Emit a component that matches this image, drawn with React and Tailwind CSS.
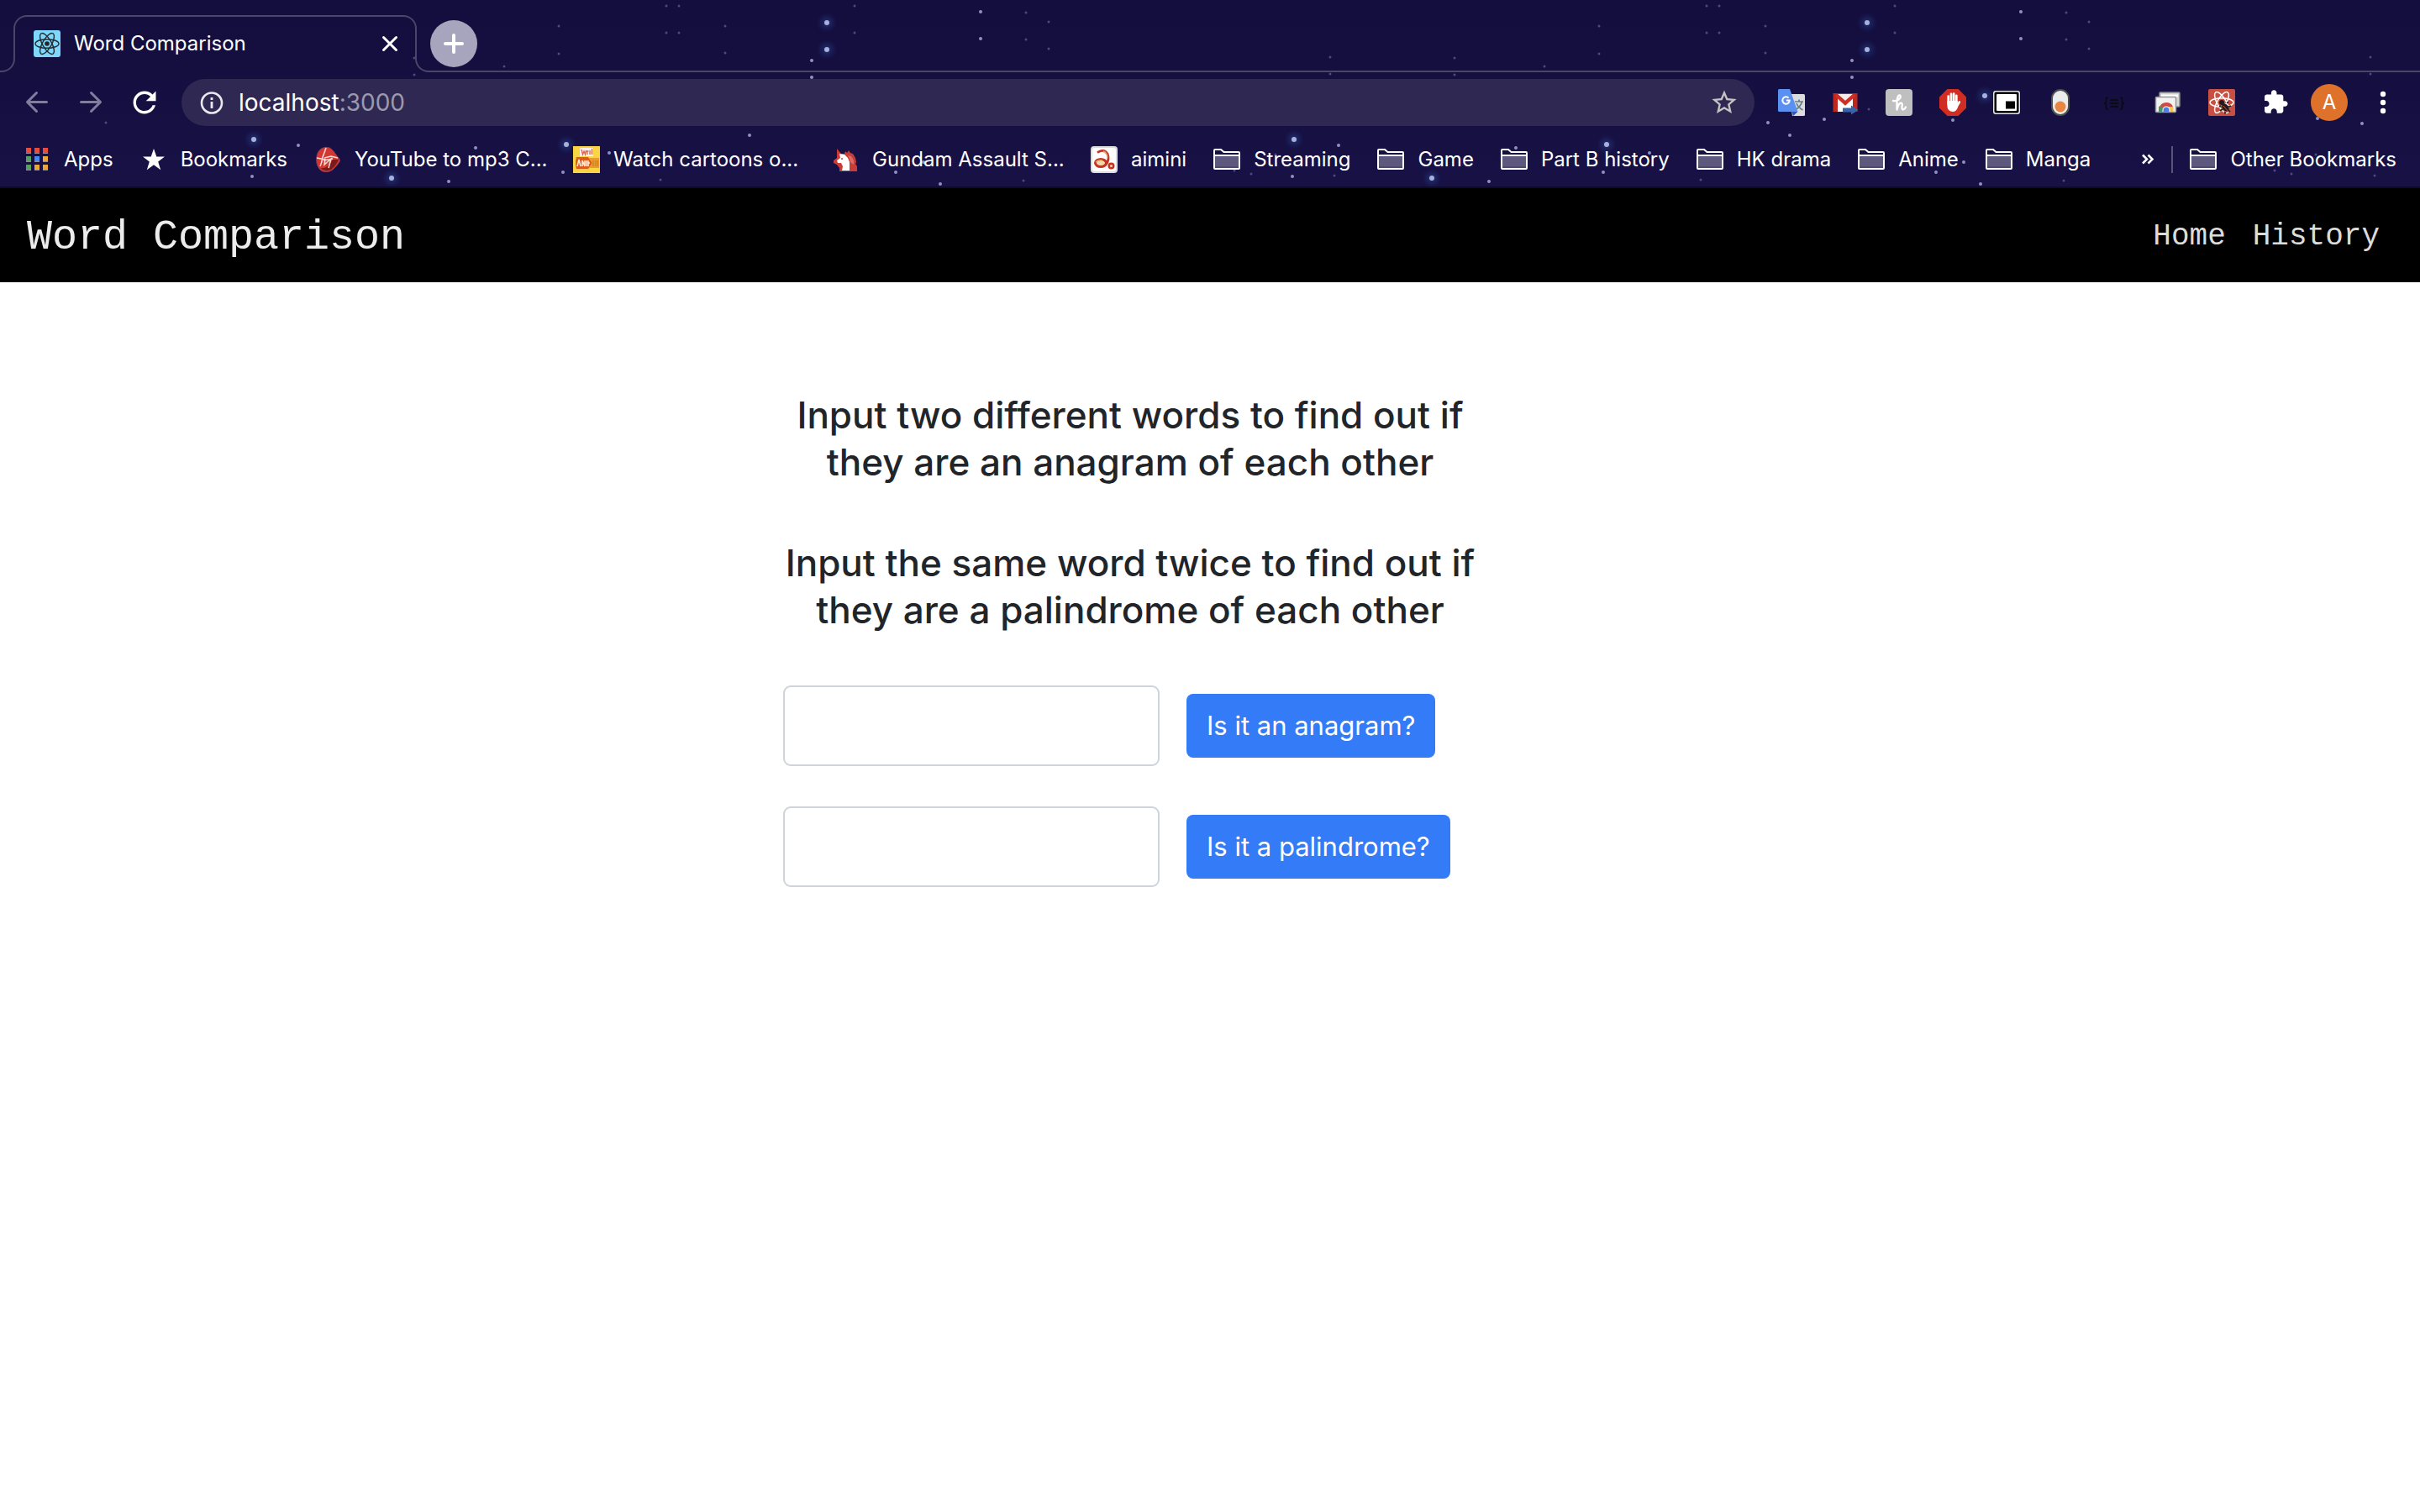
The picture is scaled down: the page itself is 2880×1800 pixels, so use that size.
import React from "react";

const icon = "block size-8 shrink-0";

/* ---------- Theme backdrop ---------- */

const brightStars = [[984, 27], [984, 59], [302, 166], [466, 212], [674, 172], [1124, 114]];
const softStars = [
  [966, 72], [966, 92], [1167, 14], [1167, 46], [355, 173], [566, 176], [1066, 205], [1119, 219],
  [866, 146], [933, 142], [1099, 193], [1520, 141], [1573, 147], [725, 182],
  [892, 161], [670, 205], [300, 210], [534, 216], [1086, 143],
];
const dimStars = [
  [793, 7], [808, 7], [793, 39], [808, 39], [665, 31], [665, 64], [863, 31], [863, 63],
  [1017, 7], [1017, 39], [1221, 15], [1221, 47], [1248, 26], [1248, 58], [493, 69], [493, 89],
  [126, 146], [600, 79], [599, 180], [786, 214], [986, 130], [1218, 215], [1469, 203],
  [1489, 207], [1588, 209], [1583, 68], [1583, 88], [1518, 184],
];

function Starfield() {
  return (
    <svg className="pointer-events-none absolute inset-0 h-full w-full" aria-hidden="true">
      <defs>
        <radialGradient id="halo">
          <stop offset="0" stopColor="#2f4f9a" stopOpacity="0.6" />
          <stop offset="1" stopColor="#1b2f74" stopOpacity="0" />
        </radialGradient>
      </defs>
      {[0, 1238].map((dx) => (
        <g key={dx}>
          {brightStars.map(([x, y]) => (
            <g key={x + "-" + y}>
              <circle cx={x + dx} cy={y} r="12" fill="url(#halo)" />
              <circle cx={x + dx} cy={y} r="3" fill="#a9b0dc" />
            </g>
          ))}
          {softStars.map(([x, y]) => (
            <circle key={x + "-" + y} cx={x + dx} cy={y} r="2" fill="#8f92c6" />
          ))}
          {dimStars.map(([x, y]) => (
            <circle key={x + "-" + y} cx={x + dx} cy={y} r="1.5" fill="#4d4a80" />
          ))}
        </g>
      ))}
    </svg>
  );
}

/* ---------- Icons ---------- */

function Orbits({ color, width, r = 13 }) {
  return (
    <g fill="none" stroke={color} strokeWidth={width}>
      {[0, 60, 120].map((a) => (
        <ellipse key={a} cx="16" cy="16" rx={r} ry={r * 0.38} transform={`rotate(${a} 16 16)`} />
      ))}
    </g>
  );
}

const ReactFavicon = () => (
  <svg viewBox="0 0 32 32" className={icon}>
    <rect width="32" height="32" rx="3" fill="#7fd8fb" />
    <Orbits color="#222b30" width="1.4" r={14} />
    <circle cx="16" cy="16" r="2.8" fill="#20262b" />
  </svg>
);

const BackIcon = () => (
  <svg viewBox="0 0 32 32" className={icon} fill="none" stroke="#827c9e" strokeWidth="3" strokeLinecap="round" strokeLinejoin="round">
    <path d="M27.500 15.500H5M15.500 4.500L4.500 15.500L15.500 26.500" />
  </svg>
);
const ForwardIcon = () => (
  <svg viewBox="0 0 32 32" className={icon} fill="none" stroke="#827c9e" strokeWidth="3" strokeLinecap="round" strokeLinejoin="round">
    <path d="M4.500 15.500H27M16.500 4.500L27.500 15.500L16.500 26.500" />
  </svg>
);
const ReloadIcon = () => (
  <svg viewBox="2.5 2.5 19 19" className={icon} fill="#fff">
    <path d="M17.650 6.350C16.200 4.900 14.210 4 12 4c-4.420 0-7.990 3.580-7.990 8s3.570 8 7.990 8c3.730 0 6.840-2.550 7.730-6h-2.080c-.82 2.330-3.040 4-5.650 4-3.310 0-6-2.690-6-6s2.690-6 6-6c1.660 0 3.140.69 4.220 1.780L13 11h7V4l-2.350 2.350z" />
  </svg>
);
const InfoIcon = () => (
  <svg viewBox="0 0 32 32" className={icon}>
    <circle cx="16" cy="16.500" r="12" fill="none" stroke="#eae8ee" strokeWidth="2.600" />
    <rect x="14.600" y="15" width="2.800" height="8" fill="#eae8ee" />
    <rect x="14.600" y="10" width="2.800" height="3" fill="#eae8ee" />
  </svg>
);
const StarOutline = () => (
  <svg viewBox="1 1 22 22" className={icon} fill="#c6c3c2">
    <path d="M22 9.240l-7.190-.62L12 2 9.190 8.630 2 9.240l5.460 4.730L5.820 21 12 17.270 18.180 21l-1.630-7.030L22 9.240zM12 15.400l-3.760 2.270 1-4.280-3.320-2.880 4.380-.38L12 6.100l1.710 4.040 4.380.38-3.320 2.880 1 4.280L12 15.400z" />
  </svg>
);
const StarFilled = () => (
  <svg viewBox="0 0 32 32" className={icon} fill="#fff">
    <path d="M16 3l3.300 9.600h9.700l-7.800 5.900 3 9.700L16 22.300l-8.200 5.900 3-9.700L3 12.600h9.700z" />
  </svg>
);
const AppsIcon = () => {
  const colors = ["#ea4b3d", "#ea4b3d", "#ea4b3d", "#55a05f", "#4587f4", "#eba734", "#55a05f", "#eba734", "#eba734"];
  return (
    <svg viewBox="0 0 32 32" className={icon}>
      {colors.map((c, i) => (
        <g key={i}>
          <rect x={3 + (i % 3) * 10} y={2 + Math.floor(i / 3) * 10} width="6" height="7" fill="#8d8799" />
          <rect x={3 + (i % 3) * 10} y={2 + Math.floor(i / 3) * 10} width="6" height="6" fill={c} />
        </g>
      ))}
    </svg>
  );
};
const FolderIcon = () => (
  <svg viewBox="0 0 32 32" className={icon}>
    <rect x="1" y="11" width="30" height="16" fill="#5f587e" />
    <rect x="2" y="24" width="28" height="2" fill="#4e486d" />
    <path d="M1 26V5Q1 4 2 4H9L12.500 7H30Q31 7 31 8V26Q31 27 30 27H2Q1 27 1 26ZM1 11H31" fill="none" stroke="#fff" strokeWidth="2" />
  </svg>
);

const VirginIcon = () => (
  <svg viewBox="0 0 32 32" className={icon}>
    <path d="M13 1.500C18 .5 22 4 25 9C28 13 30.500 15 30.500 17.500C29 21 25 25 22 28C18 31 11 32 7 28C3 24 2 18 3 12C4 6 8 2 13 1.500Z" fill="#d3372f" stroke="#8a3a5c" strokeWidth="1" />
    <path d="M22 16L29 16Q26 23 20 28Q12 31 7 26Q15 28 22 16Z" fill="#7d1a1a" />
    <path d="M3 14L13 16L12 22L20 15L17 26M14 2Q12 8 10 13Q9 20 7 24M12 14L20 12L28 14M11 17L22 15" fill="none" stroke="#f7d9d5" strokeWidth="1.600" />
  </svg>
);
const AnimeIcon = () => (
  <svg viewBox="0 0 32 32" className={icon}>
    <rect width="32" height="32" fill="#fbd443" />
    <rect x="8" y="2" width="16" height="10" rx="1" fill="#fdf0ee" />
    <path d="M10 4l1.500 6 1.500-4 1.500 4L15.500 5M17 10V6M20 5V10M22.500 3V10M15 6H18.500" stroke="#d8664a" strokeWidth="1.300" fill="none" />
    <path d="M4 13H18L23 20L18 27H4Q2 20 4 13Z" fill="#dd5a1d" />
    <path d="M19 14H31V26H19L22.500 20Z" fill="#eb9a2e" />
    <path d="M5 24L7 16L9 24M11 24V17L14 24V17M16 24V17M18 17V24M18 20H20" stroke="#fff0dc" strokeWidth="1.500" fill="none" />
    <path d="M24 17V24M27 17V24M29.500 17V24" stroke="#c98122" strokeWidth="1.200" />
  </svg>
);
const UnicornIcon = () => (
  <svg viewBox="0 0 32 32" className={icon}>
    <path d="M6 3L11 9H15L16 6L18 8L20 5L22 8L25 9L28 14L29 19L28 21L30 24V30H9V26L6 22L2 20V17L6 14V8Z" fill="#c93c37" />
    <path d="M9 9L15 10L19 14L21 19V29H12L13 24L11 20L7 20L6 17L10 14Z" fill="#fff" />
    <path d="M19 11L23 12L26 17V22L22 19L21 15Z" fill="#dd6a66" />
    <circle cx="12" cy="15" r="1" fill="#c93c37" />
  </svg>
);
const AiminiIcon = () => (
  <svg viewBox="0 0 32 32" className={icon}>
    <rect width="32" height="32" rx="4" fill="#dcdcde" />
    <rect x="2" y="2" width="28" height="28" rx="3" fill="#fff" />
    <path d="M9 7Q16 3 20 9Q23 16 18 22" fill="none" stroke="#c73222" strokeWidth="2.800" strokeLinecap="round" />
    <ellipse cx="12" cy="20" rx="6.500" ry="4.500" fill="#f3d9a8" stroke="#c73222" strokeWidth="3" />
    <circle cx="24.500" cy="23.500" r="2.800" fill="#f3d9a8" stroke="#c73222" strokeWidth="2.400" />
    <path d="M6 19Q9 16 14 17M15 6Q20 8 20 14" fill="none" stroke="#e0a86a" strokeWidth="1.400" />
  </svg>
);

const TranslateIcon = () => (
  <svg viewBox="0 0 32 32" className={icon}>
    <path d="M13 6H30.500Q32 6 32 7.500V30.500Q32 32 30.500 32H17Z" fill="#dcdcdc" />
    <path d="M20 15H30M25 12.500V15M28.500 15Q27 21 21 24.500M22 17Q24 22 29.500 25" fill="none" stroke="#64808c" strokeWidth="1.700" />
    <path d="M16.500 27H23.500L18 32Z" fill="#3455b4" />
    <path d="M1.500 0H14L23.500 27H1.500Q0 27 0 25.500V1.500Q0 0 1.500 0Z" fill="#5a90f0" />
    <path d="M12.600 10.600A4.200 4.200 0 1 0 13.700 13.600H9.800" fill="none" stroke="#fff" strokeWidth="2" />
  </svg>
);
const GmailForwardIcon = () => (
  <svg viewBox="0 0 32 32" className={icon}>
    <rect x="1.500" y="5" width="29" height="22" fill="#bf261d" />
    <path d="M7 27V10L16 18L25 10V27Z" fill="#fff" />
    <path d="M7 6H25L16 14Z" fill="#f6eceb" />
    <path d="M5 7L16 17L27 7" fill="none" stroke="#cf2f25" strokeWidth="4" />
    <path d="M13 22.500H23V19.500L31.500 25L23 30.500V27.500H13Z" fill="#3763ad" />
  </svg>
);
const HoneyIcon = () => (
  <svg viewBox="0 0 32 32" className={icon}>
    <rect width="32" height="32" rx="4" fill="#bfbfbf" />
    <path d="M9 14Q14 15 17.500 10.500Q18.500 7 16 7.500Q13.500 9 13.500 17V24.500Q15 17 18.500 16.500Q20.500 17 19.500 20.500Q19 24.500 21 24.500Q23 24 24 21.500" fill="none" stroke="#fff" strokeWidth="2.300" strokeLinecap="round" strokeLinejoin="round" />
  </svg>
);
const AdblockIcon = () => (
  <svg viewBox="0 0 32 32" className={icon}>
    <path d="M9.500 0H22.500L32 9.500V22.500L22.500 32H9.500L0 22.500V9.500Z" fill="#d22d22" />
    <g stroke="#fff" strokeWidth="2.700" strokeLinecap="round" fill="none">
      <path d="M10.700 18V8.500M14 16V5.800M17.200 16V5.500M20.300 17V7.800" />
      <path d="M21 20L23.800 15.500" />
    </g>
    <path d="M9.400 14H21.600V19.500L23 17Q22 26.500 16.500 27Q9.400 27 9.400 20Z" fill="#fff" />
  </svg>
);
const PipIcon = () => (
  <svg viewBox="0 0 32 32" className={icon}>
    <rect x="0" y="2" width="32" height="28" rx="3" fill="#e4e4e6" />
    <rect x="1.500" y="3.500" width="29" height="25" rx="2" fill="#000" />
    <rect x="4" y="6" width="24" height="20" rx="1" fill="#fff" />
    <rect x="15" y="14.500" width="11" height="9" fill="#000" />
  </svg>
);
const ToggleIcon = () => (
  <svg viewBox="0 0 32 32" className={icon}>
    <rect x="6" y="1" width="20" height="30" rx="10" fill="#ebecec" stroke="#4f4f50" strokeWidth="2" />
    <circle cx="16" cy="21" r="6.500" fill="#e98742" />
  </svg>
);
const BracesIcon = () => (
  <svg viewBox="0 0 32 32" className={icon} fill="none" stroke="#0c0a17" strokeWidth="2">
    <path d="M9 10Q6 10 6.500 13Q7 17 4 17Q7 17 6.500 21Q6 24 9 24M23 10Q26 10 25.500 13Q25 17 28 17Q25 17 25.500 21Q26 24 23 24M11 13H21M11 17H21M11 21H21M18 11.500V14.500M14 15.500V18.500M18 19.500V22.500" />
  </svg>
);
const ChromeWindowsIcon = () => (
  <svg viewBox="0 0 32 32" className={icon}>
    <rect x="6" y="4" width="24" height="17" rx="1" fill="#d5d5d5" stroke="#8a8a8a" strokeWidth="1.500" />
    <rect x="8" y="6.500" width="20" height="3" fill="#fff" />
    <rect x="1.500" y="9.500" width="24" height="18" rx="1" fill="#f2f2f2" stroke="#969696" strokeWidth="1.500" />
    <path d="M5.500 27V22Q8 16 14 16Q20 16 22 21H14Z" fill="#cf4b3f" />
    <path d="M5 27V21L8 20L11 27Z" fill="#45995c" />
    <path d="M16 21H22.500V27H15Z" fill="#f3c548" />
    <path d="M9.500 27V25A4.500 4.500 0 0 1 18.500 25V27Z" fill="#fff" />
    <path d="M10.500 27V25A3.500 3.500 0 0 1 17.500 25V27Z" fill="#4a7de6" />
  </svg>
);
const ReactDebugIcon = () => (
  <svg viewBox="0 0 32 32" className={icon}>
    <rect width="32" height="32" rx="2" fill="#c85042" />
    <Orbits color="#fff" width="1.500" r={14} />
    <path d="M14 14L24 21L26 27L20 28L13 20Z" fill="#c85042" />
    <circle cx="16" cy="16" r="3" fill="#1c1b1d" />
    <ellipse cx="20.500" cy="22" rx="3.600" ry="5" transform="rotate(-40 20.500 22)" fill="#1c1b1d" />
    <path d="M22 17L24 15M24 21L27 20M24 25L26 27M15 20L13 21M17 24L14 26M20 27V29.500" stroke="#1c1b1d" strokeWidth="1.600" />
    <path d="M18 20L23.500 26.500" stroke="#c85042" strokeWidth="1" />
  </svg>
);
const PuzzleIcon = () => (
  <svg viewBox="0 0 22 22" className={icon} fill="#fff">
    <path d="M19.500 10H18V6c0-1.100-.9-2-2-2h-4V2.500C12 1.120 10.880 0 9.500 0S7 1.120 7 2.500V4H3c-1.100 0-1.990.9-1.990 2v3.800H2.500c1.490 0 2.700 1.210 2.700 2.700s-1.210 2.700-2.700 2.700H1V19c0 1.100.9 2 2 2h3.800v-1.500c0-1.490 1.210-2.700 2.700-2.700 1.490 0 2.700 1.210 2.700 2.700V21H16c1.100 0 2-.9 2-2v-4h1.500c1.380 0 2.500-1.120 2.500-2.500S20.880 10 19.500 10z" transform="translate(1.200 .8) scale(.9)" />
  </svg>
);
const DotsIcon = () => (
  <svg viewBox="0 0 32 32" className={icon} fill="#fff">
    <circle cx="16" cy="6" r="3.200" />
    <circle cx="16" cy="16" r="3.200" />
    <circle cx="16" cy="26" r="3.200" />
  </svg>
);

/* ---------- Browser chrome ---------- */

const extensions = [
  ["Translate", TranslateIcon],
  ["Mail forward", GmailForwardIcon],
  ["Honey", HoneyIcon],
  ["Ad blocker", AdblockIcon],
  ["Picture in picture", PipIcon],
  ["Toggle", ToggleIcon],
  ["Formatter", BracesIcon],
  ["Windows", ChromeWindowsIcon],
  ["React tools", ReactDebugIcon],
  ["Extensions", PuzzleIcon],
];

const bookmarks = [
  ["Apps", AppsIcon],
  ["Bookmarks", StarFilled],
  ["YouTube to mp3 C...", VirginIcon, true],
  ["Watch cartoons o...", AnimeIcon, true],
  ["Gundam Assault S...", UnicornIcon, true],
  ["aimini", AiminiIcon],
  ["Streaming", FolderIcon],
  ["Game", FolderIcon],
  ["Part B history", FolderIcon],
  ["HK drama", FolderIcon],
  ["Anime", FolderIcon],
  ["Manga", FolderIcon],
];

function TabStrip() {
  return (
    <div className="flex h-[86px] items-end">
      <div className="h-6 w-[18px] shrink-0 rounded-br-2xl border-r-2 border-b-2 border-[#4a4569]" />
      <div className="mb-6 -ml-0.5 flex h-11 w-[480px] shrink-0 items-start gap-4 rounded-t-2xl border-x-2 border-t-2 border-[#4a4569] px-[22px] pt-4">
        <ReactFavicon />
        <span className="flex-1 text-2xl">Word Comparison</span>
        <button aria-label="Close tab" className="-mr-2">
          <svg viewBox="0 0 32 32" className={icon} stroke="#fff" strokeWidth="3" strokeLinecap="round">
            <path d="M8.500 8.500L23.500 23.500M23.500 8.500L8.500 23.500" />
          </svg>
        </button>
      </div>
      <div className="-ml-0.5 flex h-6 flex-1 items-end rounded-bl-2xl border-b-2 border-l-2 border-[#4a4569] pb-1 pl-4">
        <button aria-label="New tab" className="flex size-14 shrink-0 items-center justify-center rounded-full bg-[#a7a5bd]">
          <svg viewBox="0 0 32 32" className={icon} stroke="#fff" strokeWidth="4" strokeLinecap="round">
            <path d="M16 6V26M6 16H26" />
          </svg>
        </button>
      </div>
    </div>
  );
}

function Toolbar() {
  return (
    <div className="flex h-[72px] items-center gap-7 px-7">
      <div className="flex items-center gap-8">
        <button aria-label="Back"><BackIcon /></button>
        <button aria-label="Forward"><ForwardIcon /></button>
        <button aria-label="Reload"><ReloadIcon /></button>
      </div>
      <div className="flex h-14 flex-1 items-center gap-4 rounded-full bg-[#2f2853] px-5">
        <InfoIcon />
        <div role="textbox" aria-label="Address" className="flex-1 text-[28px]">
          localhost<span className="text-[#9c98ae]">:3000</span>
        </div>
        <button aria-label="Bookmark this page"><StarOutline /></button>
      </div>
      <div className="flex items-center gap-8">
        {extensions.map(([name, Icon]) => (
          <button key={name} aria-label={name}><Icon /></button>
        ))}
        <button className="-mx-1.5 flex size-11 items-center justify-center rounded-full bg-[#de722b] text-2xl">A</button>
        <button aria-label="Menu"><DotsIcon /></button>
      </div>
    </div>
  );
}

function BookmarksBar() {
  return (
    <div className="flex h-16 items-center gap-8 px-7 text-2xl whitespace-nowrap">
      {bookmarks.map(([name, Icon, wide]) => (
        <button key={name} className="flex items-center gap-4">
          <Icon />
          <span className={wide ? "w-[228px] text-left" : ""}>{name}</span>
        </button>
      ))}
      <div className="ml-auto flex items-center gap-5">
        <button aria-label="More bookmarks">
          <svg viewBox="0 0 16 32" className="block h-8 w-4" fill="none" stroke="#fff" strokeWidth="2.500">
            <path d="M2 10.500L7 15.500L2 20.500M8.500 10.500L13.500 15.500L8.500 20.500" />
          </svg>
        </button>
        <div className="h-8 w-0.5 bg-[#5a5477]" />
        <button className="flex items-center gap-4">
          <FolderIcon />
          <span>Other Bookmarks</span>
        </button>
      </div>
    </div>
  );
}

/* ---------- Page ---------- */

function WordRow({ id, label }) {
  return (
    <div className="flex items-center gap-8">
      <input
        id={id}
        type="text"
        aria-label={label}
        className="h-24 w-[448px] rounded-[9px] border-2 border-[#ced4da] bg-white px-6 text-[31px] outline-none"
      />
      <button type="button" className="rounded-lg bg-[#337bf7] px-6 py-3.5 text-[31px] leading-[48px] text-white">
        {label}
      </button>
    </div>
  );
}

export default function App() {
  return (
    <div className={'min-h-screen bg-white font-["Inter",sans-serif]'}>
      <header className="relative border-b-2 border-[#0d0930] bg-[#140f40] bg-linear-to-b from-[#140e3e] to-[#171145] text-white">
        <Starfield />
        <div className="relative">
          <TabStrip />
          <Toolbar />
          <BookmarksBar />
        </div>
      </header>

      <nav className={'flex h-28 items-center justify-between bg-black pt-1 pr-12 pl-8 font-["Liberation_Mono",monospace] text-[#ececec]'}>
        <a href="#" className="text-[50px]">Word Comparison</a>
        <div className="flex gap-8 text-[36px] text-[#dcdcdc]">
          <a href="#home">Home</a>
          <a href="#history">History</a>
        </div>
      </nav>

      <main className="ml-[calc(100%/3-28px)] w-[826px] pt-[130px]">
        <div className="flex flex-col gap-16 text-center text-[44px] leading-[56px] font-medium whitespace-nowrap text-[#212529]">
          <h1>Input two different words to find out if<br />they are an anagram of each other</h1>
          <h2>Input the same word twice to find out if<br />they are a palindrome of each other</h2>
        </div>
        <form className="mt-[62px] flex flex-col gap-12">
          <WordRow id="first-word" label="Is it an anagram?" />
          <WordRow id="second-word" label="Is it a palindrome?" />
        </form>
      </main>
    </div>
  );
}
